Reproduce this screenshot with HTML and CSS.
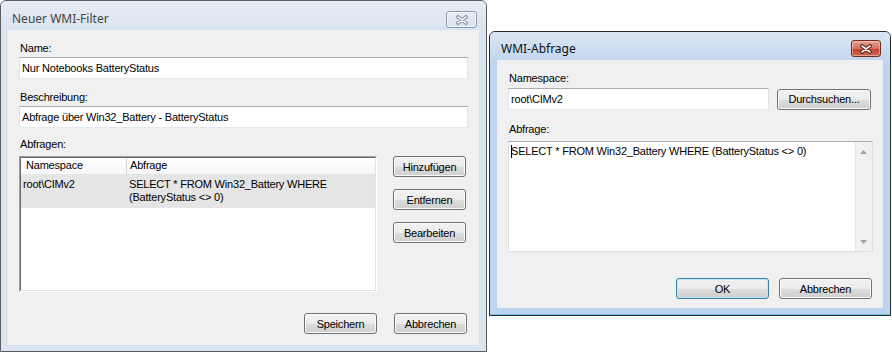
FILE: index.html
```html
<!DOCTYPE html>
<html>
<head>
<meta charset="utf-8">
<title>WMI-Filter</title>
<link rel="stylesheet" href="styles.css">
</head>
<body>
<div class="desktop">

	<!-- Hauptdialog, inaktiv -->
	<div class="window inactive filter-win">
		<div class="titlebar">
			<span class="caption">Neuer WMI-Filter</span>
			<div class="close-btn">
				<svg width="12" height="10" viewBox="0 0 12 10"><path d="M2 2 L10 8 M10 2 L2 8" class="x-out"/><path d="M2 2 L10 8 M10 2 L2 8" class="x-in"/></svg>
			</div>
		</div>
		<div class="client filter-client">
			<div class="label first">Name:</div>
			<div class="textbox wide">Nur Notebooks BatteryStatus</div>
			<div class="label">Beschreibung:</div>
			<div class="textbox wide">Abfrage über Win32_Battery - BatteryStatus</div>
			<div class="label lbl-list">Abfragen:</div>
			<div class="query-area">
				<div class="listview">
					<div class="lv-inner">
						<div class="lv-header">
							<div class="col-ns">Namespace</div>
							<div class="col-q">Abfrage</div>
						</div>
						<div class="lv-row selected">
							<div class="col-ns">root\CIMv2</div>
							<div class="col-q">SELECT * FROM Win32_Battery WHERE<br>(BatteryStatus &lt;&gt; 0)</div>
						</div>
					</div>
				</div>
				<div class="side-buttons">
					<button class="button">Hinzufügen</button>
					<button class="button">Entfernen</button>
					<button class="button">Bearbeiten</button>
				</div>
			</div>
			<div class="dialog-buttons filter-buttons">
				<button class="button">Speichern</button>
				<button class="button">Abbrechen</button>
			</div>
		</div>
	</div>

	<!-- Abfragedialog, aktiv -->
	<div class="window active query-win">
		<div class="titlebar">
			<span class="caption">WMI-Abfrage</span>
			<div class="close-btn">
				<svg width="12" height="10" viewBox="0 0 12 10"><path d="M2 2 L10 8 M10 2 L2 8" class="x-out"/><path d="M2 2 L10 8 M10 2 L2 8" class="x-in"/></svg>
			</div>
		</div>
		<div class="client query-client">
			<div class="label first">Namespace:</div>
			<div class="ns-row">
				<div class="textbox ns-box">root\CIMv2</div>
				<button class="button browse">Durchsuchen...</button>
			</div>
			<div class="label lbl-memo">Abfrage:</div>
			<div class="memo">
				<div class="memo-text"><span class="caret"></span>SELECT * FROM Win32_Battery WHERE (BatteryStatus &lt;&gt; 0)</div>
				<div class="scrollbar">
					<svg width="7" height="4" viewBox="0 0 7 4"><path d="M0 4 L3.5 0 L7 4 Z"/></svg>
					<svg width="7" height="4" viewBox="0 0 7 4"><path d="M0 0 L7 0 L3.5 4 Z"/></svg>
				</div>
			</div>
			<div class="dialog-buttons query-buttons">
				<button class="button default">OK</button>
				<button class="button">Abbrechen</button>
			</div>
		</div>
	</div>

</div>
</body>
</html>
```

FILE: styles.css
```css
body {
	margin: 0;
	background: #fff;
}

.desktop {
	position: relative;
	width: 892px;
	height: 353px;
	overflow: hidden;
	background: #fff;
	font-family: "Liberation Sans", Arial, sans-serif;
	font-size: 11px;
	letter-spacing: -0.2px;
	color: #000;
}

/* fenster */

.window {
	position: absolute;
	box-sizing: border-box;
	display: flex;
	flex-direction: column;
	border: 1px solid #555;
	border-radius: 6px 6px 0 0;
	padding: 0 7px 6px 7px;
}

.window.inactive {
	background: #dae5f2;
	border-color: #5c5c5c;
}

.window.active {
	background: #bcd4ef;
	border-color: #2a2a2a;
	padding-bottom: 7px;
	box-shadow: inset 0 -1px 0 #6cc9e6;
}

.filter-win {
	left: 0;
	top: 0;
	width: 487px;
	height: 352px;
}

.query-win {
	left: 489px;
	top: 31px;
	width: 402px;
	height: 285px;
}

.titlebar {
	display: flex;
	justify-content: space-between;
	align-items: flex-start;
	margin: 0 -7px;
	padding: 0 9px 0 11px;
	border-radius: 5px 5px 0 0;
}

.inactive .titlebar {
	height: 29px;
	background: linear-gradient(#e6ecf3, #dae4f0);
}

.active .titlebar {
	height: 28px;
	background: linear-gradient(#dbe6f3, #c3d7ee);
}

.caption {
	font-family: "Noto Sans", "Open Sans", sans-serif;
	font-size: 12px;
	letter-spacing: 0;
	line-height: 16px;
}

.inactive .caption {
	color: #444;
	padding-top: 10px;
}

.active .caption {
	color: #111;
	padding-top: 9px;
}

.close-btn {
	box-sizing: border-box;
	height: 17px;
	display: flex;
	align-items: center;
	justify-content: center;
	border-radius: 3px;
}

.inactive .close-btn {
	width: 31px;
	margin-top: 10px;
	border: 1px solid #8d9bb0;
	background: linear-gradient(#e9eef4, #d9e2ed);
	box-shadow: inset 0 0 0 1px rgba(255,255,255,0.6);
}

.active .close-btn {
	width: 30px;
	margin-top: 8px;
	border: 1px solid #6e2c25;
	background: linear-gradient(#e8a493 0%, #d66e5b 50%, #c2402c 51%, #d06a52 100%);
	box-shadow: inset 0 0 0 1px rgba(255,210,200,0.5);
}

.close-btn svg {
	display: block;
}

.x-out {
	stroke-width: 3.6;
	stroke-linecap: round;
	fill: none;
}

.x-in {
	stroke-width: 1.6;
	stroke-linecap: round;
	fill: none;
}

.inactive .x-out { stroke: #7a8798; }
.inactive .x-in { stroke: #f4f6f9; }
.active .x-out { stroke: #4a1810; }
.active .x-in { stroke: #fff; }

.client {
	flex: 1;
	display: flex;
	flex-direction: column;
	background: #f0f0f0;
}

/* controls */

.label {
	line-height: 13px;
	margin: 12px 0 2px 1px;
}

.label.first {
	margin-top: 0;
}

.textbox {
	box-sizing: border-box;
	height: 22px;
	line-height: 20px;
	padding: 0 2px;
	background: #fff;
	border: 1px solid #e2e3ea;
	border-top-color: #abadb3;
	border-bottom-color: #e3e9ef;
	white-space: nowrap;
}

.button {
	box-sizing: border-box;
	height: 21px;
	padding: 0;
	font-family: "Liberation Sans", Arial, sans-serif;
	font-size: 11px;
	letter-spacing: -0.2px;
	color: #000;
	border: 1px solid #707070;
	border-radius: 3px;
	background: linear-gradient(#f2f2f2 0%, #ebebeb 50%, #dddddd 51%, #cfcfcf 100%);
	box-shadow: inset 0 0 0 1px #fbfbfb;
}

.button.default {
	border-color: #3c7fb1;
	box-shadow: inset 0 0 0 1px #bfe7fa;
}

.dialog-buttons {
	display: flex;
	justify-content: flex-end;
}

/* neuer wmi-filter */

.filter-client {
	padding: 12px 12px 0 11px;
}

.textbox.wide {
	width: 449px;
}

.lbl-list {
	margin-top: 10px;
	margin-bottom: 5px;
}

.query-area {
	display: flex;
	gap: 16px;
}

.listview {
	box-sizing: border-box;
	width: 358px;
	height: 136px;
	border: 1px solid;
	border-color: #a0a0a0 #fff #fff #a0a0a0;
}

.lv-inner {
	box-sizing: border-box;
	height: 100%;
	border: 1px solid;
	border-color: #696969 #e3e3e3 #e3e3e3 #696969;
	background: #fff;
}

.lv-header {
	display: flex;
	height: 16px;
	line-height: 15px;
	background: linear-gradient(#fff, #f6f7f9);
	border-bottom: 1px solid #e5e5e5;
}

.lv-header .col-ns {
	box-sizing: border-box;
	width: 106px;
	padding-left: 5px;
	border-right: 1px solid #d5d5d5;
}

.lv-header .col-q {
	padding-left: 3px;
}

.lv-row {
	display: flex;
	line-height: 13px;
	padding: 3px 0 4px 0;
}

.lv-row.selected {
	background: #e5e5e5;
}

.lv-row .col-ns {
	width: 106px;
	padding-left: 2px;
	box-sizing: border-box;
}

.lv-row .col-q {
	padding-left: 2px;
}

.side-buttons {
	display: flex;
	flex-direction: column;
	gap: 12px;
}

.side-buttons .button,
.filter-buttons .button {
	width: 73px;
}

.filter-buttons {
	margin-top: 21px;
	gap: 17px;
}

/* wmi-abfrage */

.query-client {
	padding: 12px 11px 0 11px;
}

.query-client .label.first {
	margin-bottom: 3px;
}

.ns-row {
	display: flex;
	align-items: center;
	gap: 8px;
}

.ns-box {
	width: 261px;
}

.button.browse {
	width: 94px;
}

.lbl-memo {
	margin-top: 13px;
	margin-bottom: 5px;
}

.memo {
	box-sizing: border-box;
	display: flex;
	width: 365px;
	height: 111px;
	background: #fff;
	border: 1px solid #dbdfe6;
	border-top-color: #abadb3;
}

.memo-text {
	flex: 1;
	padding: 3px 2px;
	line-height: 13px;
	white-space: nowrap;
}

.caret {
	display: inline-block;
	width: 0;
	height: 13px;
	margin-right: -1px;
	vertical-align: top;
	border-left: 1px solid #000;
}

.scrollbar {
	width: 17px;
	display: flex;
	flex-direction: column;
	justify-content: space-between;
	align-items: center;
	padding: 8px 0 7px 0;
	box-sizing: border-box;
	background: linear-gradient(to right, #e6e6e6, #f2f2f2 2px, #efefef);
}

.scrollbar svg {
	display: block;
	fill: #a3a3a3;
}

.query-buttons {
	margin-top: 26px;
	gap: 10px;
}

.query-buttons .button {
	width: 93px;
}
```
